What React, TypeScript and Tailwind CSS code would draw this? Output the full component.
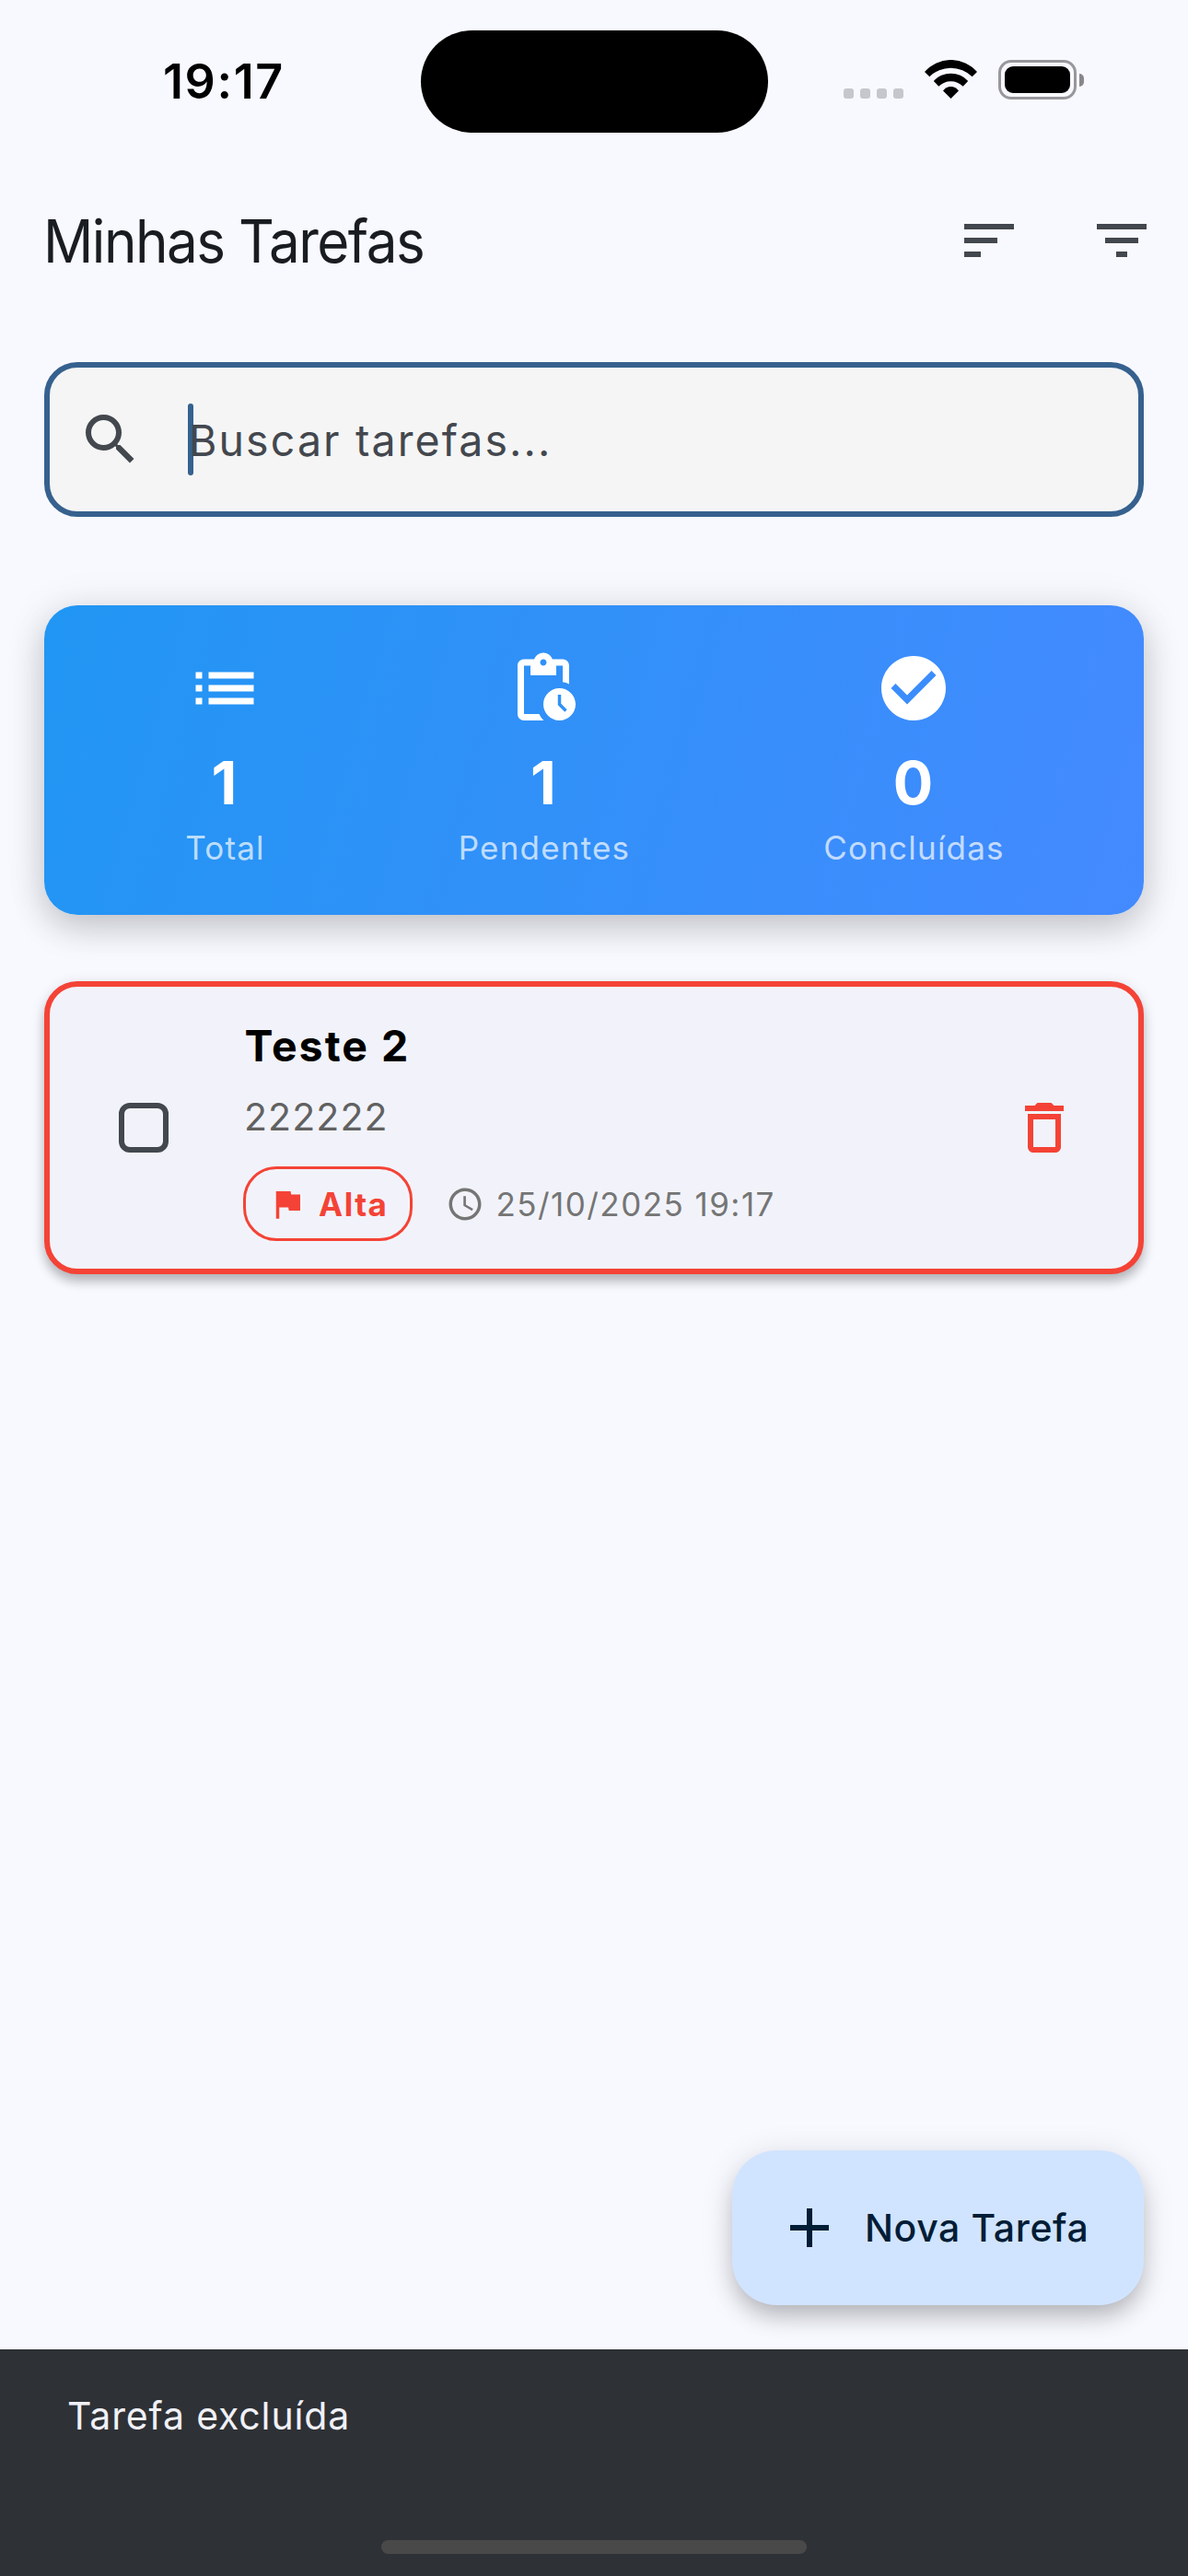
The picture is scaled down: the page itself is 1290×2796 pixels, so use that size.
import type { ReactNode } from "react";
import {
  MdAccessTime,
  MdAdd,
  MdCheckCircle,
  MdDeleteOutline,
  MdFilterList,
  MdFlag,
  MdList,
  MdPendingActions,
  MdSearch,
  MdSort,
} from "react-icons/md";

function StatusBar() {
  return (
    <div className="flex h-[177px] shrink-0 items-start">
      <div className="flex h-[177px] w-[457px] pt-[59px] pl-[177px]">
        <span className="h-[60px] text-[52px] leading-[60px] font-semibold tracking-[1.6px] text-black">19:17</span>
      </div>
      <div className="mt-[33px] h-[111px] w-[377px] rounded-full bg-black" />
      <div className="ml-[82px] flex gap-[7px] pt-[96px]">
        {[0, 1, 2, 3].map((i) => (
          <span key={i} className="size-[11px] rounded-[3px] bg-[#c6c7cc]" />
        ))}
      </div>
      <svg viewBox="0 0 57 42" className="mt-[65px] ml-[23px] h-[42px] w-[57px]" fill="black">
        <path d="M0 13A37.7 37.7 0 0 1 57 13L51.7 18.3A32.8 32.8 0 0 0 5.3 18.3Z" />
        <path d="M9.8 23A25.2 25.2 0 0 1 47.2 23L41.7 28.7A18.8 18.8 0 0 0 15.3 28.7Z" />
        <path d="M20 33.5A10.3 10.3 0 0 1 37 33.5L28.5 42Z" />
      </svg>
      <div className="mt-[65px] ml-[23px] flex items-center gap-[3px]">
        <div className="h-[43px] w-[85px] rounded-[14px] border-[3px] border-[#98989c] p-[4px]">
          <div className="h-full w-full rounded-[9px] bg-black" />
        </div>
        <div className="h-[14px] w-[5px] rounded-r-[5px] bg-[#88888c]" />
      </div>
    </div>
  );
}

function AppBar() {
  return (
    <header className="flex h-[168px] shrink-0 items-center pr-[36px] pl-[47px] text-[#43474e]">
      <h1 className="flex-1 origin-left scale-x-[0.94] pt-[2px] text-[64px] leading-[80px] tracking-[-1.6px] whitespace-nowrap text-[#191c20]">
        Minhas Tarefas
      </h1>
      <MdSort className="size-[72px]" />
      <MdFilterList className="ml-[72px] size-[72px]" />
    </header>
  );
}

function SearchField() {
  return (
    <div className="mx-12 mt-12 flex h-[168px] shrink-0 items-center rounded-[36px] border-[6px] border-[#36618e] bg-[#f5f5f5] pl-[30px] text-[#43474e]">
      <MdSearch className="size-[72px]" />
      <div className="ml-12 h-[78px] w-[6px] rounded-full bg-[#36618e]" />
      <span className="-ml-[5px] pt-[2px] text-[46.5px] leading-[78px] tracking-[2.1px]">Buscar tarefas...</span>
    </div>
  );
}

function Stat({ icon, value, label, width }: { icon: ReactNode; value: string; label: string; width: string }) {
  return (
    <div className={"flex flex-col items-center text-white " + width}>
      {icon}
      <span className="mt-[20px] text-[64.5px] leading-[82px] font-bold">{value}</span>
      <span className="mt-[6px] pl-[2px] text-[35px] leading-[46px] tracking-[1.2px] whitespace-nowrap text-white/70">{label}</span>
    </div>
  );
}

function StatsCard() {
  return (
    <section className="mx-12 mt-24 flex h-[336px] shrink-0 justify-around rounded-[36px] bg-[linear-gradient(105.72deg,#2196f3,#448aff)] px-12 pt-12 shadow-[0_15px_36px_rgba(0,0,0,0.17),0_3px_48px_rgba(0,0,0,0.09)]">
      <Stat icon={<MdList className="size-[84px]" />} value="1" label="Total" width="w-[84px]" />
      <Stat icon={<MdPendingActions className="size-[84px]" />} value="1" label="Pendentes" width="w-[187px]" />
      <Stat icon={<MdCheckCircle className="size-[84px]" />} value="0" label="Concluídas" width="w-[194px]" />
    </section>
  );
}

function TaskCard() {
  return (
    <article className="mx-12 mt-[72px] flex h-[318px] shrink-0 items-center rounded-[36px] border-[6px] border-[#f44336] bg-[#f2f3fa] pr-[66px] pl-[75px] shadow-[0_9px_12px_-1px_rgba(0,0,0,0.22),0_3px_16px_rgba(0,0,0,0.12)]">
      <div className="size-[54px] rounded-[12px] border-[6px] border-[#43474e]" />
      <div className="ml-[81px] flex flex-1 flex-col">
        <h2 className="pl-[1.5px] text-[46.5px] leading-[68px] font-bold tracking-[2px] text-black">Teste 2</h2>
        <p className="mt-[13px] pl-px text-[41px] leading-[60px] tracking-[1.1px] text-[#616161]">222222</p>
        <div className="mt-6 flex items-center">
          <div className="flex h-[81px] w-[184px] items-center rounded-[36px] border-[3px] border-[#f44336] pl-6 text-[#f44336]">
            <MdFlag className="size-[42px] shrink-0" />
            <span className="ml-[13px] text-[35px] leading-[48px] font-bold tracking-[1.5px]">Alta</span>
          </div>
          <MdAccessTime className="ml-9 size-[42px] text-[#757575]" />
          <span className="ml-[12.5px] pt-px text-[35px] leading-[48px] tracking-[1.45px] text-[#757575]">25/10/2025 19:17</span>
        </div>
      </div>
      <MdDeleteOutline className="size-[72px] text-[#f44336]" />
    </article>
  );
}

export default function App() {
  return (
    <div className="flex h-[2796px] w-[1290px] flex-col overflow-hidden bg-[#f8f9ff] font-['Inter','Liberation_Sans',sans-serif]">
      <StatusBar />
      <AppBar />
      <SearchField />
      <StatsCard />
      <TaskCard />
      <div className="flex flex-1 items-end justify-end pr-12 pb-12">
        <button className="flex h-[168px] w-[447px] items-center rounded-[48px] bg-[#d1e4ff] pl-12 text-[#001d36] shadow-[0_15px_24px_-4px_rgba(0,0,0,0.21),0_6px_36px_rgba(0,0,0,0.12)]">
          <MdAdd className="size-[72px]" />
          <span className="ml-6 text-[41px] leading-[60px] font-medium tracking-[0.6px]">Nova Tarefa</span>
        </button>
      </div>
      <footer className="z-10 flex h-[246px] shrink-0 flex-col bg-[#2e3135]">
        <p className="mt-[42px] ml-[73px] text-[41px] leading-[60px] tracking-[0.85px] text-[#f0f0f7]">Tarefa excluída</p>
        <div className="mt-auto mb-6 h-[15px] w-[462px] self-center rounded-full bg-[#494949]" />
      </footer>
    </div>
  );
}
